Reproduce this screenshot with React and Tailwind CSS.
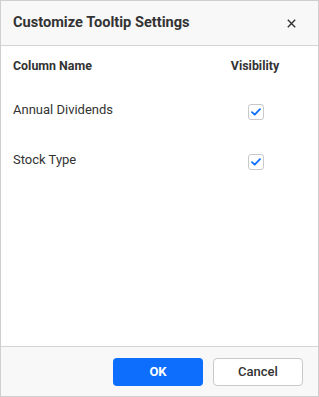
import React, { useState } from "react";

const ROWS = [
  { id: "dividends", label: "Annual Dividends", gap: "mt-[24px]" },
  { id: "stockType", label: "Stock Type", gap: "mt-[30px]" }
];

function CheckBox({ checked, onChange }) {
  return (
    <button
      type="button"
      onClick={onChange}
      className="mt-[4px] flex h-[16px] w-[16px] items-center justify-center rounded-[3px] border border-[#c9c9c9] bg-white"
    >
      {checked && (
        <svg width="10" height="8" viewBox="0 0 10 8" fill="none">
          <path d="M1 4.2 L3.7 6.6 L9 1.2" stroke="#0d6efd" strokeWidth="1.8" strokeLinecap="round" strokeLinejoin="round" />
        </svg>
      )}
    </button>
  );
}

export default function App() {
  const [visible, setVisible] = useState({ dividends: true, stockType: true });

  return (
    <div className="flex h-[397px] w-[319px] flex-col border border-[#cfcfcf] bg-white font-['Roboto',sans-serif] text-[#333]">
      <div className="flex h-[45px] shrink-0 items-center justify-between border-b border-[#d4d4d4] bg-[#f8f8f8] pl-[12px] pr-[22px]">
        <h2 className="text-[14.6px] font-bold">Customize Tooltip Settings</h2>
        <button type="button" className="flex h-[10px] w-[10px] items-center justify-center">
          <svg width="9" height="9" viewBox="0 0 9 9">
            <path d="M0.8 0.8 L8.2 8.2 M8.2 0.8 L0.8 8.2" stroke="#333" strokeWidth="1.4" />
          </svg>
        </button>
      </div>

      <div className="flex-1 pl-[12px] pr-[37px] pt-[10px]">
        <div className="flex h-[20px] items-center justify-between text-[12.4px] font-bold leading-[20px]">
          <span>Column Name</span>
          <span className="w-[52px] text-center">Visibility</span>
        </div>
        {ROWS.map((row) => (
          <div key={row.id} className={`flex h-[20px] items-start justify-between ${row.gap}`}>
            <span className="text-[13px] leading-[20px]">{row.label}</span>
            <div className="flex w-[52px] justify-center pl-[2px]">
              <CheckBox
                checked={visible[row.id]}
                onChange={() => setVisible((cur) => ({ ...cur, [row.id]: !cur[row.id] }))}
              />
            </div>
          </div>
        ))}
      </div>

      <div className="flex h-[50px] shrink-0 items-center justify-end gap-[10px] border-t border-[#d4d4d4] bg-[#f8f8f8] pr-[15px]">
        <button type="button" className="h-[28px] w-[90px] rounded-[4px] bg-[#0d6efd] text-[13px] font-bold text-white">
          OK
        </button>
        <button type="button" className="h-[28px] w-[90px] rounded-[4px] border border-[#c9c9c9] bg-white text-[13px] font-medium text-[#333]">
          Cancel
        </button>
      </div>
    </div>
  );
}
